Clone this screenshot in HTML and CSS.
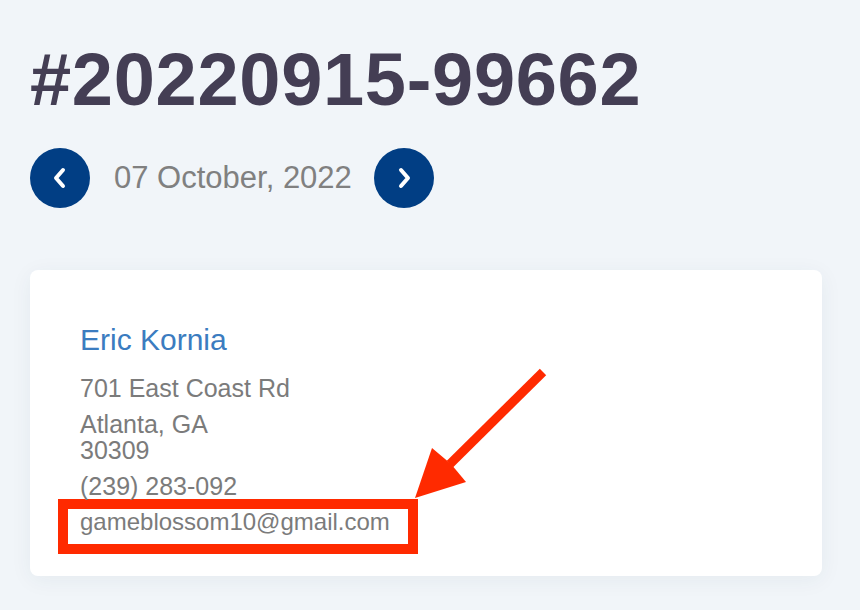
FILE: index.html
```html
<!DOCTYPE html>
<html lang="en">
<head>
<meta charset="UTF-8">
<meta name="viewport" content="width=device-width, initial-scale=1.0">
<title>Order #20220915-99662</title>
<link rel="stylesheet" href="styles.css">
</head>
<body>

<div class="page">
  <!-- Order number -->
  <h1 class="order-title">#20220915-99662</h1>

  <!-- Date switcher -->
  <div class="date-nav">
    <button type="button" class="nav-button" aria-label="Previous day">
      <svg width="20" height="22" viewBox="0 0 20 22"><path d="M13 3 L6 11 L13 19" fill="none" stroke="#fff" stroke-width="4" stroke-linecap="round" stroke-linejoin="round"/></svg>
    </button>
    <span class="date-label">07 October, 2022</span>
    <button type="button" class="nav-button" aria-label="Next day">
      <svg width="20" height="22" viewBox="0 0 20 22"><path d="M7 3 L14 11 L7 19" fill="none" stroke="#fff" stroke-width="4" stroke-linecap="round" stroke-linejoin="round"/></svg>
    </button>
  </div>

  <!-- Customer card -->
  <div class="customer-card">
    <h2 class="customer-name">Eric Kornia</h2>
    <p class="customer-line">701 East Coast Rd</p>
    <p class="customer-line">Atlanta, GA<br>30309</p>
    <p class="customer-line">(239) 283-092</p>
    <p class="customer-line customer-email">gameblossom10@gmail.com</p>
  </div>

  <!-- Annotation arrow pointing at the email -->
  <svg class="annotation" width="860" height="610" viewBox="0 0 860 610">
    <line x1="543" y1="372" x2="450" y2="464" stroke="#ff2a00" stroke-width="9"/>
    <polygon points="415,498 432,448 451,464 466,482" fill="#ff2a00"/>
  </svg>
</div>

</body>
</html>
```

FILE: styles.css
```css
body {
  margin: 0;
  padding: 0;
  background-color: #f1f5f9;
  font-family: "Liberation Sans", Arial, sans-serif;
}
.page {
  position: relative; /* anchor for the annotation overlay */
  width: 860px;
  height: 610px;
  padding: 43px 38px 0 30px;
  box-sizing: border-box;
  overflow: hidden;
}
.order-title {
  margin: 0;
  font-size: 74px;
  line-height: 74px;
  font-weight: bold;
  letter-spacing: 0.7px;
  color: #443e54;
}
.date-nav {
  display: flex;
  align-items: center;
  margin-top: 31px;
}
.nav-button {
  width: 60px;
  height: 60px;
  border: none;
  border-radius: 50%;
  background-color: #013e84;
  padding: 0;
  display: flex;
  justify-content: center;
  align-items: center;
  cursor: pointer;
}
.date-label {
  margin: 0 22px 0 24px;
  font-size: 31px;
  color: #808080;
}
.customer-card {
  margin-top: 62px;
  width: 792px;
  padding: 52px 50px 22px;
  box-sizing: border-box;
  background-color: #fff;
  border-radius: 8px;
  box-shadow: 0 4px 22px rgba(40, 60, 90, 0.06);
}
.customer-name {
  margin: 0 0 17px;
  font-size: 30px;
  line-height: 36px;
  font-weight: normal;
  color: #3b7cc0;
}
.customer-line {
  margin: 0 0 10px;
  font-size: 25px;
  line-height: 26px;
  color: #7b7b7b;
}
.customer-email {
  margin: -10px 0 0 -22px; /* box sits tight under the phone, left of the text column */
  width: 328px;
  padding: 0 0 9px 12px;
  border: 10px solid #ff2a00;
  font-size: 24px;
}
.annotation {
  position: absolute;
  top: 0;
  left: 0;
  pointer-events: none;
}
```
